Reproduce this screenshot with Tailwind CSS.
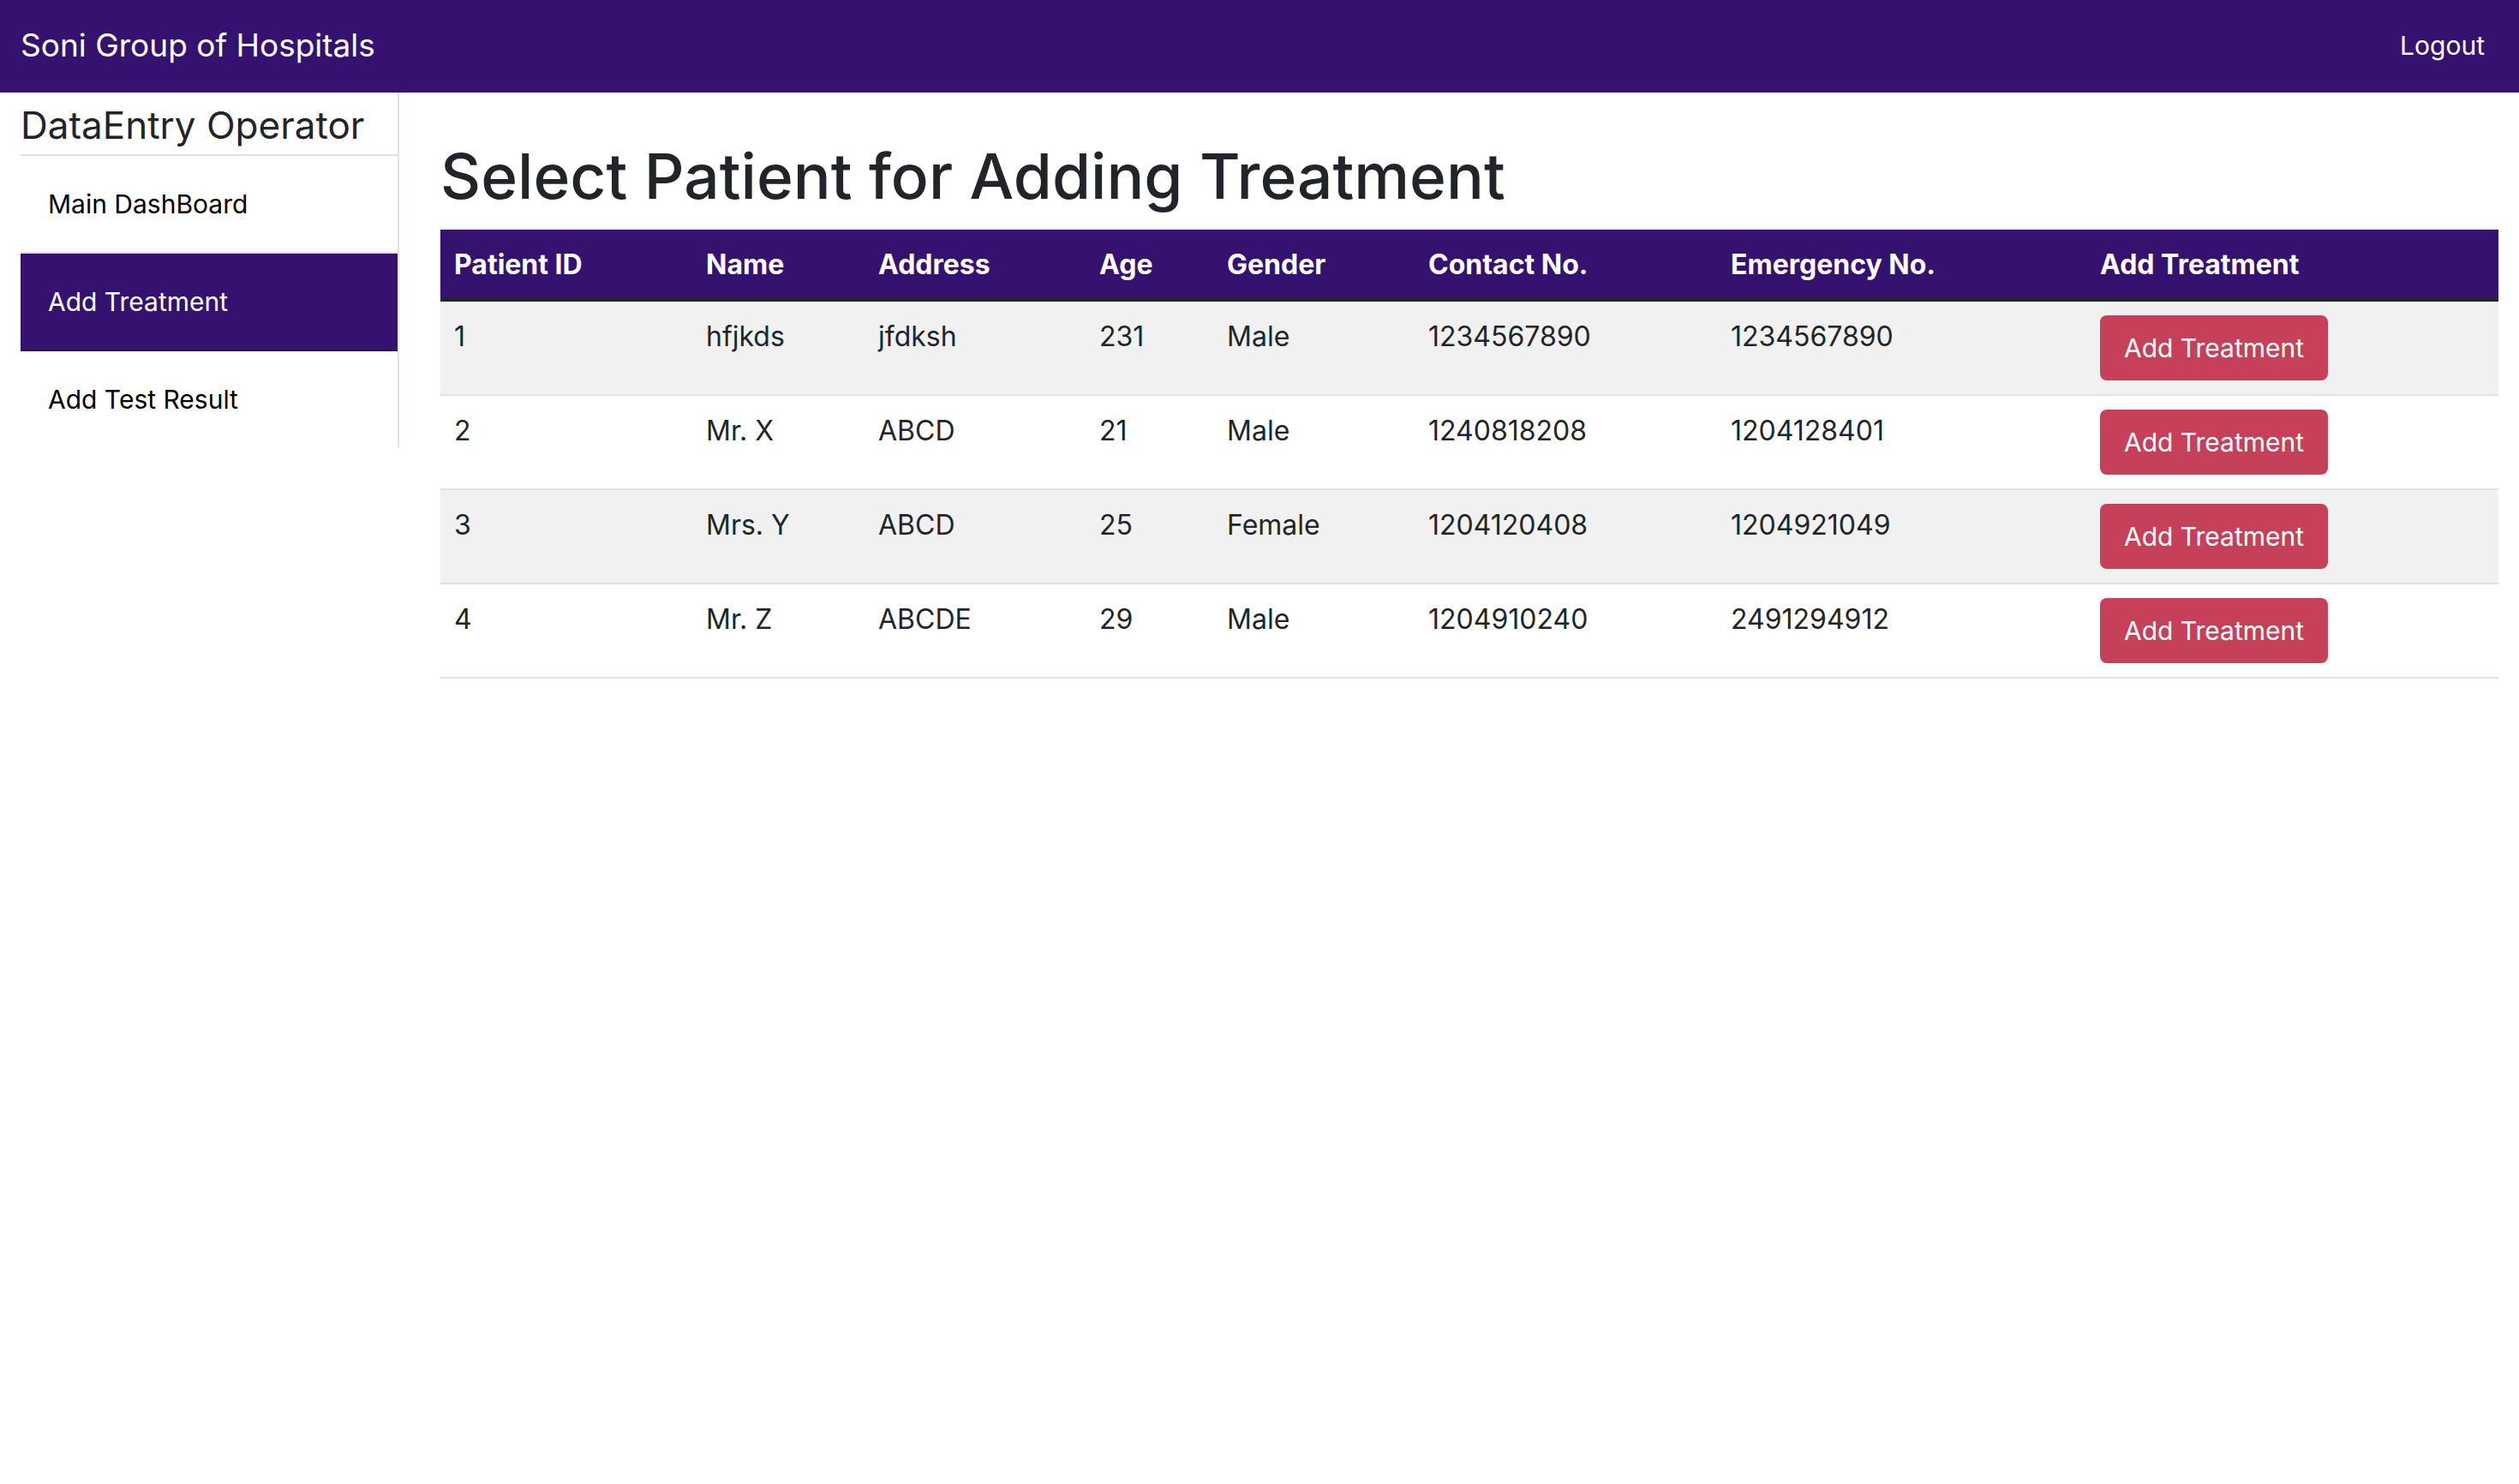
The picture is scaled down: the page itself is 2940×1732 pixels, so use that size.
<!DOCTYPE html>
<html lang="en">
<head>
<meta charset="utf-8">
<title>Soni Group of Hospitals</title>
<script src="https://cdn.jsdelivr.net/npm/@tailwindcss/browser@4"></script>
</head>
<body class="bg-white font-['Inter',sans-serif] text-[32px] leading-[48px] text-[#212529]">
<nav class="flex h-[108px] items-center justify-between bg-[#351270] px-6 pb-[2px] text-white">
  <a href="#" class="text-[37px] leading-[60px]">Soni Group of Hospitals</a>
  <a href="#" class="px-4 text-[30px]">Logout</a>
</nav>
<div class="flex items-start">
  <aside class="w-1/6 px-6">
    <div class="border-r-2 border-[#dee2e6]">
      <h2 class="border-b-2 border-[#dee2e6] pt-2 pb-1 text-[44px] leading-[60px] whitespace-nowrap">DataEntry Operator</h2>
      <ul class="text-[30px] text-black">
        <li><a href="#" class="block border-b-2 border-[#dfdfdf] px-8 py-8">Main DashBoard</a></li>
        <li><a href="#" class="block border-b-2 border-[#2e1062] bg-[#351270] px-8 py-8 text-white">Add Treatment</a></li>
        <li><a href="#" class="block px-8 py-8">Add Test Result</a></li>
      </ul>
    </div>
  </aside>
  <main class="w-5/6 px-6 pt-[50px]">
    <h1 class="mb-[14px] text-[73px] leading-[96px] font-medium">Select Patient for Adding Treatment</h1>
    <table class="w-full table-fixed border-separate border-spacing-0 text-left align-top">
      <colgroup>
        <col class="w-[294px]"><col class="w-[201px]"><col class="w-[258px]"><col class="w-[149px]"><col class="w-[235px]"><col class="w-[353px]"><col class="w-[431px]"><col class="w-[481px]">
      </colgroup>
      <thead class="bg-[#351270] text-white [&_th]:border-b-4 [&_th]:border-[#212529] [&_th]:px-4 [&_th]:pt-[17px] [&_th]:pb-[15px] [&_th]:font-bold">
        <tr><th>Patient ID</th><th>Name</th><th>Address</th><th>Age</th><th>Gender</th><th>Contact No.</th><th>Emergency No.</th><th>Add Treatment</th></tr>
      </thead>
      <tbody class="[&_td]:border-b-2 [&_td]:border-[#dee2e6] [&_td]:px-4 [&_td]:pt-[17px] [&_td]:pb-[15px] [&_td]:align-top [&_td:last-child]:py-4 [&_button]:block [&_button]:rounded-lg [&_button]:bg-[#c6405a] [&_button]:px-7 [&_button]:py-[14px] [&_button]:text-[30px] [&_button]:text-white">
        <tr class="bg-[#f1f1f1]"><td>1</td><td>hfjkds</td><td>jfdksh</td><td>231</td><td>Male</td><td>1234567890</td><td>1234567890</td><td><button type="button">Add Treatment</button></td></tr>
        <tr><td>2</td><td>Mr. X</td><td>ABCD</td><td>21</td><td>Male</td><td>1240818208</td><td>1204128401</td><td><button type="button">Add Treatment</button></td></tr>
        <tr class="bg-[#f1f1f1]"><td>3</td><td>Mrs. Y</td><td>ABCD</td><td>25</td><td>Female</td><td>1204120408</td><td>1204921049</td><td><button type="button">Add Treatment</button></td></tr>
        <tr><td>4</td><td>Mr. Z</td><td>ABCDE</td><td>29</td><td>Male</td><td>1204910240</td><td>2491294912</td><td><button type="button">Add Treatment</button></td></tr>
      </tbody>
    </table>
  </main>
</div>
</body>
</html>
